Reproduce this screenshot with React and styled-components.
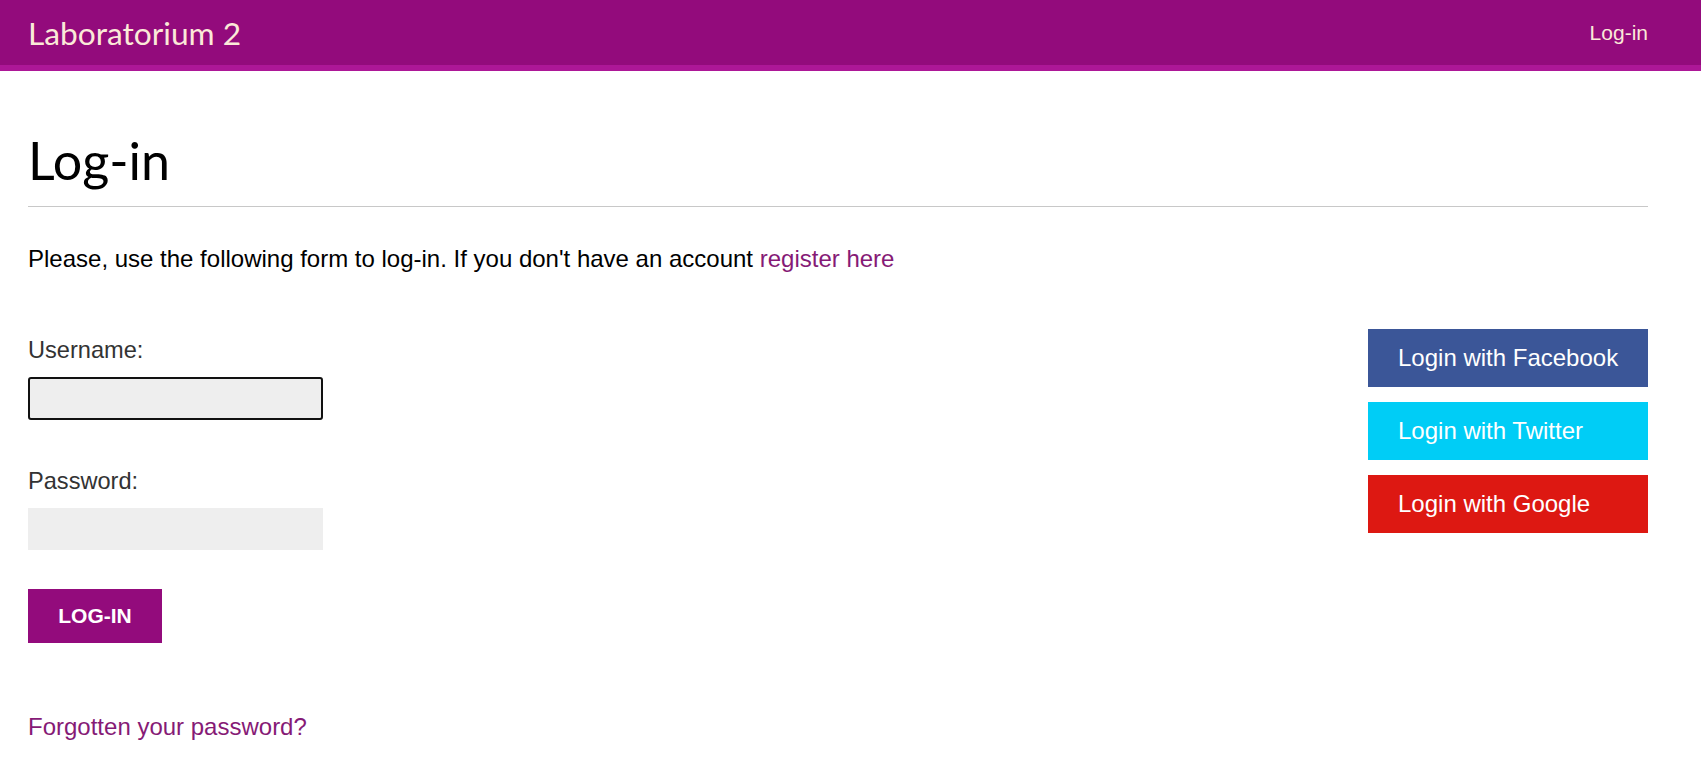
import React from "react";
import styled, { createGlobalStyle } from "styled-components";

const GlobalStyle = createGlobalStyle`
  body {
    margin: 0;
    background: #fff;
    font-family: "Liberation Sans", Arial, sans-serif;
    color: #111;
  }
`;

const Header = styled.header`
  height: 65px;
  display: flex;
  align-items: center;
  justify-content: space-between;
  padding: 0 53px 0 28px;
  background-color: #930b7c;
  border-bottom: 6px solid #ad1797;
`;

const Logo = styled.span`
  font-family: Lato, "Noto Sans", sans-serif;
  font-size: 31.7px;
  color: #fbe9d8;
`;

const NavLink = styled.a`
  font-size: 21px;
  color: #fbe9d8;
  text-decoration: none;
`;

const Content = styled.main`
  padding: 0 53px 0 28px;
`;

const Title = styled.h1`
  margin: 58px 0 0;
  padding-bottom: 15px;
  border-bottom: 1px solid #c8c8c8;
  font-family: Lato, "Noto Sans", sans-serif;
  font-size: 52px;
  font-weight: 400;
  line-height: 62px;
  color: #000;
`;

const Intro = styled.p`
  margin: 38px 0 0;
  font-size: 24px;
  line-height: 28px;
  color: #000;
`;

const Link = styled.a`
  color: #861a76;
  text-decoration: none;
`;

const Row = styled.div`
  display: flex;
  justify-content: space-between;
  align-items: flex-start;
  margin-top: 56px;
`;

const Form = styled.form`
  display: flex;
  flex-direction: column;
  align-items: flex-start;
  padding-top: 8px;
`;

const Label = styled.label`
  font-size: 23.6px;
  line-height: 27px;
  color: #333;
  margin-top: ${(p) => (p.$first ? "0" : "48px")};
`;

const Input = styled.input`
  box-sizing: border-box;
  width: 295px;
  height: ${(p) => (p.$focused ? "43px" : "42px")};
  margin-top: 13px;
  padding: 8px;
  border: ${(p) => (p.$focused ? "2px solid #111" : "0")};
  border-radius: ${(p) => (p.$focused ? "3px" : "0")};
  background: #eee;
  font-size: 16px;
  outline: none;
`;

const SubmitButton = styled.button`
  width: 134px;
  height: 54px;
  margin-top: 39px;
  border: none;
  background-color: #930b7c;
  color: #fff;
  font-family: "Liberation Sans", Arial, sans-serif;
  font-size: 21px;
  font-weight: bold;
  text-transform: uppercase;
  cursor: pointer;
`;

const Forgot = styled(Link)`
  display: block;
  margin-top: 70px;
  font-size: 24px;
  line-height: 28px;
`;

const Social = styled.ul`
  list-style: none;
  margin: 0;
  padding: 0;
  display: flex;
  flex-direction: column;
  gap: 15px;
`;

const SocialButton = styled.a`
  box-sizing: border-box;
  display: flex;
  align-items: center;
  width: 280px;
  height: 58px;
  padding-left: 30px;
  background-color: ${(p) => p.$color};
  color: #fff;
  font-size: 24px;
  text-decoration: none;
`;

const socials = [
  { name: "Facebook", color: "#3b5698" },
  { name: "Twitter", color: "#00cdf6" },
  { name: "Google", color: "#dd1812" },
];

export default function App() {
  return (
    <>
      <GlobalStyle />
      <Header>
        <Logo>Laboratorium 2</Logo>
        <NavLink href="#">Log-in</NavLink>
      </Header>
      <Content>
        <Title>Log-in</Title>
        <Intro>
          Please, use the following form to log-in. If you don't have an
          account <Link href="#">register here</Link>
        </Intro>
        <Row>
          <div>
            <Form onSubmit={(e) => e.preventDefault()}>
              <Label $first htmlFor="username">Username:</Label>
              <Input id="username" type="text" $focused />
              <Label htmlFor="password">Password:</Label>
              <Input id="password" type="password" />
              <SubmitButton type="submit">Log-in</SubmitButton>
            </Form>
            <Forgot href="#">Forgotten your password?</Forgot>
          </div>
          <Social>
            {socials.map((s) => (
              <li key={s.name}>
                <SocialButton href="#" $color={s.color}>
                  Login with {s.name}
                </SocialButton>
              </li>
            ))}
          </Social>
        </Row>
      </Content>
    </>
  );
}
